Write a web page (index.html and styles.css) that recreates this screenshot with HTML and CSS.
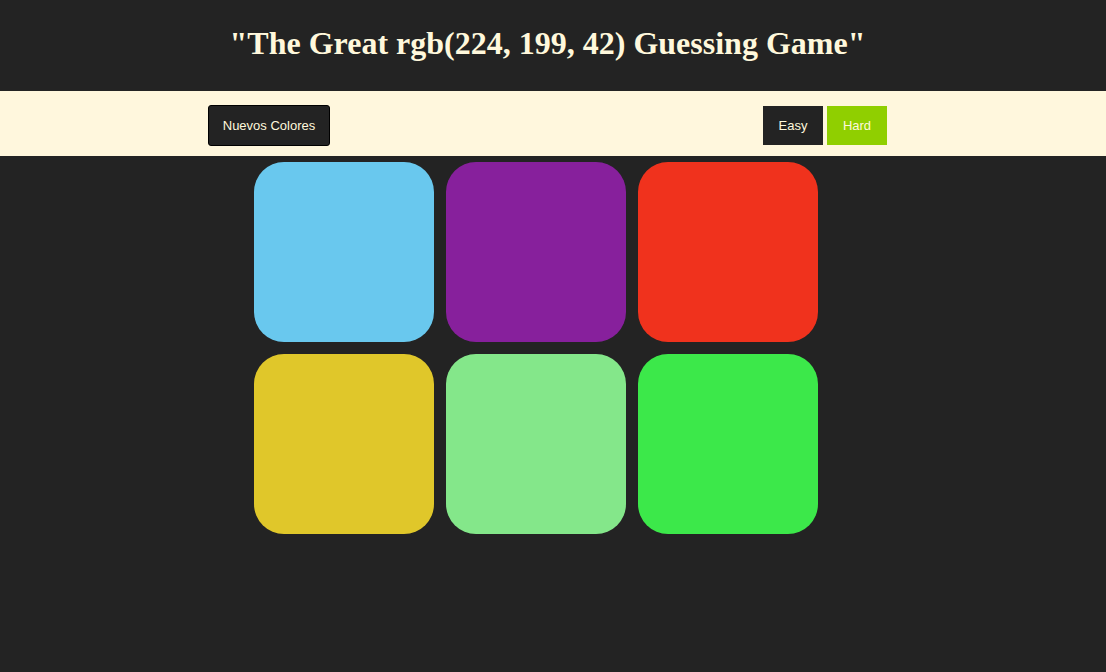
FILE: index.html
```html
<!DOCTYPE html>
<html>
<head>
<meta charset="utf-8">
<link rel="stylesheet" href="styles.css">
</head>
<body>
<header class="top">
  <h1 class="title">"The Great rgb(224, 199, 42) Guessing Game"</h1>
</header>
<nav class="bar">
  <div class="bar-inner">
    <button class="btn-new">Nuevos Colores</button>
    <div class="modes">
      <button class="mode">Easy</button>
      <button class="mode selected">Hard</button>
    </div>
  </div>
</nav>
<main class="board">
  <div class="square" style="background:#69c8ee"></div>
  <div class="square" style="background:#87209c"></div>
  <div class="square" style="background:#f0321d"></div>
  <div class="square" style="background:#e0c72a"></div>
  <div class="square" style="background:#84e78a"></div>
  <div class="square" style="background:#3ce84a"></div>
</main>
</body>
</html>
```

FILE: styles.css
```css
html, body {
  margin: 0;
  padding: 0;
  background: #232323;
  height: 100%;
}
body {
  font-family: "Liberation Sans", Arial, sans-serif;
}
.top {
  height: 91px;
  display: flex;
  align-items: center;
  justify-content: center;
}
.title {
  margin: 0;
  padding-bottom: 4px;
  padding-right: 11px;
  font-family: "Liberation Serif", "Times New Roman", serif;
  font-weight: bold;
  font-size: 32px;
  color: #fff8dc;
  letter-spacing: 0;
}
.bar {
  background: #fff7dd;
  height: 65px;
}
.bar-inner {
  height: 100%;
  display: flex;
  align-items: center;
  justify-content: space-between;
  padding-left: 208px;
  padding-right: 219px;
}
.btn-new {
  height: 41px;
  width: 122px;
  background: #232323;
  color: #fff8dc;
  border: 1px solid #000;
  border-radius: 3px;
  font-family: "Liberation Sans", Arial, sans-serif;
  font-size: 13px;
  padding: 0;
  margin-top: 3px;
}
.modes {
  display: flex;
  gap: 4px;
  margin-top: 4px;
}
.mode {
  width: 60px;
  height: 39px;
  border: none;
  background: #232323;
  color: #fff8dc;
  font-family: "Liberation Sans", Arial, sans-serif;
  font-size: 13px;
  padding: 0;
}
.mode.selected {
  background: #90cf00;
}
.board {
  margin-top: 6px;
  margin-left: calc(50% - 299px);
  width: 564px;
  display: grid;
  grid-template-columns: repeat(3, 180px);
  gap: 12px;
}
.square {
  width: 180px;
  height: 180px;
  border-radius: 30px;
}
```
